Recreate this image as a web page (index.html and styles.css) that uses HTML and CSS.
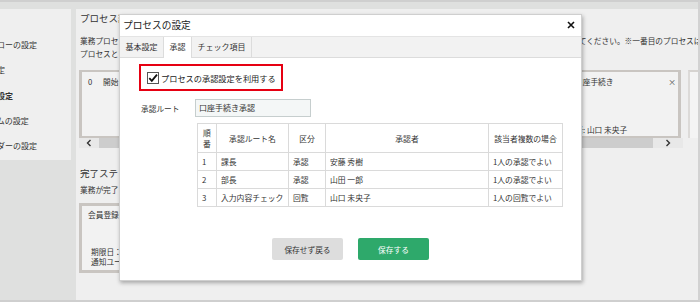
FILE: index.html
```html
<!DOCTYPE html>
<html lang="ja">
<head>
    <meta charset="UTF-8">
    <meta name="viewport" content="width=device-width, initial-scale=1.0">
    <title>プロセスの設定</title>
    <link rel="stylesheet" href="styles.css">
</head>
<body>
    <div class="app">
        <aside class="sidebar">
            <ul class="side-menu">
                <li class="side-item">業務フローの設定</li>
                <li class="side-item">通知設定</li>
                <li class="side-item current">権限の設定</li>
                <li class="side-item">フォームの設定</li>
                <li class="side-item">カレンダーの設定</li>
            </ul>
        </aside>

        <main class="main">
            <h2 class="section-title">プロセス設定</h2>
            <p class="desc desc-first">業務プロセスを設定します。プロセスを追加するには「プロセス追加」ボタンをクリックし、プロセスの名称と担当者、期限日、通知先を設定してください。※一番目のプロセスは開始プロセスです。</p>
            <p class="desc">プロセスとプロセスの間は矢印で結ばれます。</p>

            <div class="strip-row">
                <div class="strip">
                    <div class="cards">
                        <div class="card card-wide">
                            <div class="card-head"><span class="num">0</span>開始</div>
                        </div>
                        <div class="card card-wide">
                            <div class="card-head"><span class="num">1</span>会員登録<span class="card-close">×</span></div>
                            <div class="card-foot">承認者: 山田 一郎</div>
                        </div>
                        <div class="card">
                            <div class="card-head"><span class="num">2</span>口座手続き<span class="card-close">×</span></div>
                            <div class="card-foot">承認者: 山口 未央子</div>
                        </div>
                    </div>
                    <div class="hscroll">
                        <span class="arrow">
                            <svg width="6" height="8" viewBox="0 0 6 8"><polyline points="4.5,1 1.5,4 4.5,7" fill="none" stroke="#333" stroke-width="1.4"/></svg>
                        </span>
                        <span class="thumb"></span>
                        <span class="arrow arrow-right">
                            <svg width="6" height="8" viewBox="0 0 6 8"><polyline points="1.5,1 4.5,4 1.5,7" fill="none" stroke="#333" stroke-width="1.4"/></svg>
                        </span>
                    </div>
                </div>
                <div class="strip-side"></div>
            </div>

            <h2 class="section-title done-title">完了ステップ</h2>
            <p class="desc desc-done">業務が完了したときの処理を設定します。</p>
            <div class="done-card">
                <div>会員登録完了</div>
                <div class="done-meta">
                    <div>期限日：3日後</div>
                    <div>通知ユーザー：山田 一郎</div>
                </div>
            </div>
        </main>

        <div class="modal">
            <div class="modal-head">
                <span class="modal-title">プロセスの設定</span>
                <svg class="modal-close" width="8" height="8" viewBox="0 0 8 8"><path d="M1 1 L7 7 M7 1 L1 7" stroke="#111" stroke-width="1.6"/></svg>
            </div>
            <div class="tabs">
                <span class="tab">基本設定</span>
                <span class="tab active">承認</span>
                <span class="tab">チェック項目</span>
            </div>
            <div class="modal-body">
                <label class="use-approval">
                    <svg class="check" width="12" height="12" viewBox="0 0 12 12">
                        <rect x="0.5" y="0.5" width="11" height="11" fill="#fff" stroke="#555"/>
                        <path d="M2.3 6.2 L4.8 8.8 L10 2.6" fill="none" stroke="#111" stroke-width="1.8"/>
                    </svg>
                    プロセスの承認設定を利用する
                </label>
                <div class="route-row">
                    <span class="route-label">承認ルート</span>
                    <div class="route-input">口座手続き承認</div>
                </div>
                <table class="route-table">
                    <colgroup>
                        <col class="c-no">
                        <col class="c-name">
                        <col class="c-kind">
                        <col class="c-user">
                        <col class="c-rule">
                    </colgroup>
                    <thead>
                        <tr>
                            <th>順<br>番</th>
                            <th>承認ルート名</th>
                            <th>区分</th>
                            <th>承認者</th>
                            <th>該当者複数の場合</th>
                        </tr>
                    </thead>
                    <tbody>
                        <tr><td>1</td><td>課長</td><td>承認</td><td>安藤 秀樹</td><td>1人の承認でよい</td></tr>
                        <tr><td>2</td><td>部長</td><td>承認</td><td>山田 一郎</td><td>1人の承認でよい</td></tr>
                        <tr><td>3</td><td>入力内容チェック</td><td>回覧</td><td>山口 未央子</td><td>1人の回覧でよい</td></tr>
                    </tbody>
                </table>
                <div class="actions">
                    <button class="btn btn-cancel">保存せず戻る</button>
                    <button class="btn btn-save">保存する</button>
                </div>
            </div>
        </div>
    </div>
</body>
</html>
```

FILE: styles.css
```css
body {
    margin: 0;
    font-family: "Noto Sans CJK JP", "Liberation Sans", sans-serif;
    color: #333;
    background: #dfe0df;
}

.app {
    position: relative;
    width: 700px;
    height: 302px;
    box-sizing: border-box;
    border-top: 2px solid #cfcfcf;
    border-right: 2px solid #d2d2d2;
    border-bottom: 2px solid #cfcfcf;
    padding-top: 7px;
    display: flex;
    gap: 5px;
    overflow: hidden;
}

/* left menu (cut off by the window) */
.sidebar {
    width: 71px;
    flex: none;
}

.side-menu {
    list-style: none;
    margin: 0;
    padding: 23px 0 0 0;
    height: 151px;
    box-sizing: border-box;
    background: #efefef;
    overflow: hidden;
}

.side-item {
    height: 25.3px;
    line-height: 25.3px;
    font-size: 8px;
    margin-left: -27px;
    white-space: nowrap;
}

.side-item.current {
    font-weight: bold;
}

/* main page behind the dialog */
.main {
    flex: 1;
    background: #efefef;
    padding: 2px 0 0 4px;
    overflow: hidden;
}

.section-title {
    margin: 0;
    font-size: 9.5px;
    line-height: 14px;
    font-weight: normal;
    color: #333;
    white-space: nowrap;
}

.desc {
    margin: 0;
    font-size: 7.7px;
    line-height: 13px;
    white-space: nowrap;
}

.desc-first {
    margin-top: 9px;
}

.strip-row {
    display: flex;
    gap: 5px;
    margin: 10px 0 0 -1px;
}

.strip {
    width: 604px;
    flex: none;
}

.cards {
    display: flex;
    gap: 7px;
    height: 68px;
    overflow: hidden;
}

.card {
    flex: none;
    width: 130px;
    box-sizing: border-box;
    border: solid #c9c5c1;
    border-width: 2px 3px;
    background: #f2f2f2;
    padding: 4px 2px 0 6px;
    font-size: 7.7px;
    line-height: 12px;
    display: flex;
    flex-direction: column;
}

.card-wide {
    width: 229px;
}

.card-head {
    display: flex;
}

.num {
    width: 15px;
}

.card-close {
    margin-left: auto;
    color: #555;
}

.card-foot {
    margin-top: auto;
    white-space: nowrap;
}

.hscroll {
    display: flex;
    height: 10px;
    background: #e8e8e8;
}

.arrow {
    width: 20px;
    display: flex;
    align-items: center;
    justify-content: center;
}

.arrow-right {
    flex: 1;
}

.thumb {
    width: 554px;
    background: #cdcdcd;
}

.strip-side {
    flex: 1;
    border-top: 2px solid #d6d3d0;
    border-left: 2px solid #dcdad8;
    background: #f4f4f4;
    height: 66px;
}

.done-title {
    margin-top: 18px;
}

.desc-done {
    margin-top: 2.5px;
}

.done-card {
    margin: 7.5px 0 0 -1px;
    width: 200px;
    height: 70px;
    box-sizing: border-box;
    border: 3px solid #c9c5c1;
    background: #f2f2f2;
    padding: 3px 6px 3px 6px;
    font-size: 7.7px;
    line-height: 12px;
    display: flex;
    flex-direction: column;
}

.done-meta {
    margin-top: auto;
    padding-left: 3px;
    line-height: 10px;
}

/* dialog */
.modal {
    position: absolute;
    left: 119px;
    top: 12px;
    width: 463px;
    height: 267px;
    box-sizing: border-box;
    background: #fff;
    border: 1px solid #cfcfcf;
    box-shadow: 1px 2px 4px rgba(0, 0, 0, 0.3);
}

.modal-head {
    height: 20px;
    display: flex;
    align-items: center;
    justify-content: space-between;
    padding: 0 6px 1px 3px;
    border-bottom: 1px solid #e4e4e4;
}

.modal-title {
    font-size: 9.7px;
    color: #222;
}

.tabs {
    display: flex;
    height: 20px;
    background: #f2f2f2;
    border-bottom: 1px solid #dcdcdc;
}

.tab {
    font-size: 8px;
    line-height: 20px;
    padding: 0 5.5px;
    border-right: 1px solid #dcdcdc;
    color: #333;
}

.tab.active {
    background: #fff;
    height: 21px;
}

.modal-body {
    padding: 0 19px;
}

.use-approval {
    margin-top: 6px;
    width: 144px;
    height: 27px;
    box-sizing: border-box;
    border: 2px solid #e60012;
    padding: 0 6px;
    display: flex;
    align-items: center;
    gap: 2px;
    font-size: 8.2px;
    color: #222;
    white-space: nowrap;
}

.check {
    flex: none;
}

.route-row {
    display: flex;
    align-items: center;
    margin-top: 8px;
}

.route-label {
    width: 56px;
    padding-left: 2px;
    box-sizing: border-box;
    font-size: 7.7px;
}

.route-input {
    width: 116px;
    height: 18px;
    box-sizing: border-box;
    border: 1px solid #c6cece;
    background: #f4f7f7;
    padding: 0 3px;
    font-size: 8px;
    line-height: 16px;
}

.route-table {
    margin: 6px 0 0 58px;
    width: 365px;
    table-layout: fixed;
    border-collapse: collapse;
    font-size: 7.8px;
}

.c-no { width: 19px; }
.c-name { width: 72px; }
.c-kind { width: 37px; }
.c-user { width: 163px; }
.c-rule { width: 74px; }

.route-table th,
.route-table td {
    border: 1px solid #dadada;
    padding: 0 4px;
    white-space: nowrap;
    overflow: hidden;
}

.route-table th {
    height: 28px;
    font-weight: normal;
    line-height: 11px;
    text-align: center;
}

.route-table th:first-child {
    padding: 0 2px;
}

.route-table td {
    height: 17px;
}

.actions {
    display: flex;
    justify-content: center;
    gap: 15px;
    margin-top: 31px;
}

.btn {
    width: 71px;
    height: 22px;
    border: none;
    border-radius: 2px;
    font-family: inherit;
    font-size: 7.7px;
    cursor: pointer;
}

.btn-cancel {
    background: #dddddd;
    color: #333;
}

.btn-save {
    background: #2ea96b;
    color: #fff;
}
```
